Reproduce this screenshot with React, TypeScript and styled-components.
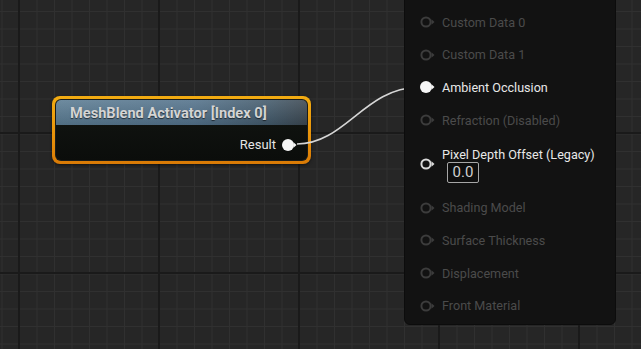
import React from "react";
import styled, { createGlobalStyle } from "styled-components";

const Global = createGlobalStyle`
  html, body { margin: 0; padding: 0; background: #262626; }
  body { font-family: Roboto, "Liberation Sans", sans-serif; overflow: hidden; }
`;

const Canvas = styled.div`
  position: relative;
  width: 641px;
  height: 349px;
  overflow: hidden;
  background-color: #262626;
  background-image:
    linear-gradient(to right, #1a1a1a 0 2px, transparent 2px),
    linear-gradient(to bottom, #1a1a1a 0 2px, transparent 2px),
    linear-gradient(to right, #303030 0 1px, transparent 1px),
    linear-gradient(to bottom, #303030 0 1px, transparent 1px);
  background-size: 140px 140px, 140px 140px, 17.5px 17.5px, 17.5px 17.5px;
  background-position: 18px 0, 0 132px, 19px 0, 0 11px;
`;

const Wire = styled.svg`
  position: absolute;
  left: 0;
  top: 0;
  pointer-events: none;
`;

const Node = styled.div`
  position: absolute;
  left: 52px;
  top: 96px;
  width: 259px;
  height: 68px;
  box-sizing: border-box;
  border-radius: 8px;
  padding: 3px;
  background: linear-gradient(to bottom, #f2ac12, #e8920a 60%, #d97a06);
  box-shadow: 0 1px 3px rgba(0, 0, 0, 0.5);
`;

const NodeInner = styled.div`
  height: 100%;
  border-radius: 6px;
  background: #1a1c1a;
  padding: 1px;
  box-sizing: border-box;
  display: flex;
  flex-direction: column;
  overflow: hidden;
`;

const Header = styled.div`
  height: 25px;
  border-radius: 5px 5px 0 0;
  background:
    linear-gradient(to bottom, rgba(255, 255, 255, 0.12), rgba(0, 0, 0, 0.1)),
    linear-gradient(to right, #5a7b92, #52718a 55%, #42596a 85%, #3a4650);
  display: flex;
  align-items: center;
  padding-left: 14px;
  font-weight: 700;
  font-size: 14.6px;
  color: #d4d4d4;
  text-shadow: 0 1px 1px rgba(0, 0, 0, 0.6);
`;

const Body = styled.div`
  flex: 1;
  border-radius: 0 0 5px 5px;
  background: linear-gradient(to bottom, #0f120f, #0b0d0b);
  display: flex;
  justify-content: flex-end;
  align-items: flex-start;
  padding: 12px 8px 0 0;
`;

const OutRow = styled.div`
  display: flex;
  align-items: center;
  gap: 5px;
  font-size: 13px;
  color: #e6e6e6;
`;

const Panel = styled.div`
  position: absolute;
  left: 404px;
  top: -10px;
  width: 212px;
  height: 335px;
  box-sizing: border-box;
  background: #121212;
  border-radius: 6px;
  border: 1px solid #0c0c0c;
  padding: 15px 0 0 14px;
  display: flex;
  flex-direction: column;
`;

const Row = styled.div<{ $tall?: boolean }>`
  height: ${(p) => (p.$tall ? "55.2px" : "32.6px")};
  display: flex;
  align-items: center;
  gap: 5px;
  flex-shrink: 0;
`;

const Label = styled.span<{ $active?: boolean }>`
  font-size: 12.6px;
  color: ${(p) => (p.$active ? "#e8e8e8" : "#4b4b4b")};
  white-space: nowrap;
`;

const Stack = styled.div`
  display: flex;
  flex-direction: column;
  gap: 0;
  margin-top: 2px;
`;

const ValueBox = styled.div`
  margin-left: 5px;
  width: 32px;
  height: 21px;
  box-sizing: border-box;
  border: 1px solid #a6a6a6;
  border-radius: 2px;
  display: flex;
  align-items: center;
  justify-content: center;
  font-size: 15px;
  color: #d0d0d0;
  background: #0e0e0e;
`;

type PinKind = "off" | "ring" | "filled";

const Pin = ({ kind }: { kind: PinKind }) => {
  const col = kind === "off" ? "#3c3c3c" : kind === "ring" ? "#dadada" : "#f6f6f6";
  return (
    <svg width="18" height="14" viewBox="0 0 18 14" style={{ flexShrink: 0 }}>
      <circle
        cx="7"
        cy="7"
        r={kind === "filled" ? 6 : 4.6}
        fill={kind === "filled" ? col : "none"}
        stroke={kind === "filled" ? "none" : col}
        strokeWidth="2"
      />
      <polygon points="12.5,4.2 15.5,7 12.5,9.8" fill={col} />
    </svg>
  );
};

const rows: { label: string; kind: PinKind; active?: boolean }[] = [
  { label: "Custom Data 0", kind: "off" },
  { label: "Custom Data 1", kind: "off" },
  { label: "Ambient Occlusion", kind: "filled", active: true },
  { label: "Refraction (Disabled)", kind: "off" },
];

const rows2: { label: string; kind: PinKind }[] = [
  { label: "Shading Model", kind: "off" },
  { label: "Surface Thickness", kind: "off" },
  { label: "Displacement", kind: "off" },
  { label: "Front Material", kind: "off" },
];

export default function App() {
  return (
    <>
      <Global />
      <Canvas>
        <Node>
          <NodeInner>
            <Header>MeshBlend Activator [Index 0]</Header>
            <Body>
              <OutRow>
                Result
                <Pin kind="filled" />
              </OutRow>
            </Body>
          </NodeInner>
        </Node>
        <Wire width="641" height="349">
          <path
            d="M297 144 C 345 144, 365 87.5, 418 87.5"
            fill="none"
            stroke="#d6d6d6"
            strokeWidth="1.6"
          />
        </Wire>
        <Panel>
          {rows.map((r) => (
            <Row key={r.label}>
              <Pin kind={r.kind} />
              <Label $active={r.active}>{r.label}</Label>
            </Row>
          ))}
          <Row $tall>
            <Pin kind="ring" />
            <Stack>
              <Label $active>Pixel Depth Offset (Legacy)</Label>
              <ValueBox>0.0</ValueBox>
            </Stack>
          </Row>
          {rows2.map((r) => (
            <Row key={r.label}>
              <Pin kind={r.kind} />
              <Label>{r.label}</Label>
            </Row>
          ))}
        </Panel>
      </Canvas>
    </>
  );
}
